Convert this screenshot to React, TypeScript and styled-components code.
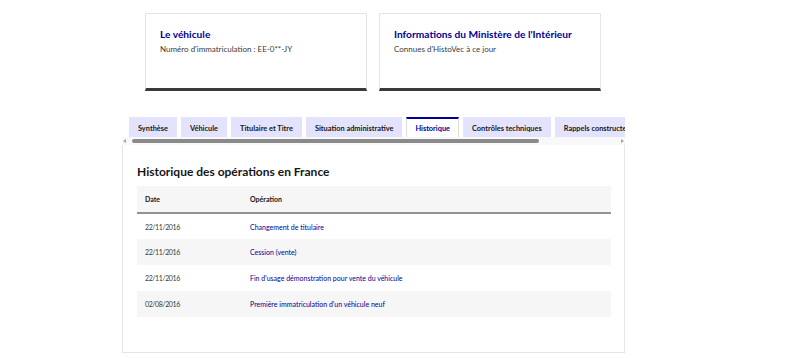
import React from "react";
import styled, { createGlobalStyle } from "styled-components";

const Global = createGlobalStyle`
  html, body { margin: 0; padding: 0; background: #fff; }
  body { font-family: Lato, "Liberation Sans", sans-serif; color: #161616; }
  * { box-sizing: border-box; }
`;

const Page = styled.div`
  width: 800px;
  height: 358px;
  padding-left: 122px;
  padding-top: 13px;
  overflow: hidden;
`;

const Column = styled.div`
  width: 503px;
  display: flex;
  flex-direction: column;
`;

const Cards = styled.div`
  display: flex;
  gap: 12px;
  padding-left: 23px;
`;

const Card = styled.div`
  width: 222px;
  height: 78px;
  border: 1px solid #e5e5e5;
  border-bottom: 3px solid #3a3a3a;
  padding: 14px 14px;
  display: flex;
  flex-direction: column;
  gap: 3px;
`;

const CardTitle = styled.div`
  font-size: 10.2px;
  font-weight: 700;
  color: #000091;
  line-height: 13px;
  white-space: nowrap;
`;

const CardText = styled.div`
  font-size: 8px;
  color: #3a3a3a;
  line-height: 11px;
`;

const Tabs = styled.div`
  margin-top: 26px;
  display: flex;
  gap: 4px;
  padding-left: 7px;
  width: 503px;
  overflow: hidden;
`;

const Tab = styled.div<{ $active?: boolean }>`
  flex: none;
  height: 20px;
  padding: 0 8px;
  display: flex;
  align-items: center;
  font-size: 7.4px;
  font-weight: 700;
  white-space: nowrap;
  background: ${(p) => (p.$active ? "#fff" : "#e3e3fd")};
  color: ${(p) => (p.$active ? "#000091" : "#161616")};
  border-top: 2px solid ${(p) => (p.$active ? "#000091" : "transparent")};
  border-left: 1px solid ${(p) => (p.$active ? "#ddd" : "transparent")};
  border-right: 1px solid ${(p) => (p.$active ? "#ddd" : "transparent")};
`;

const ScrollBar = styled.div`
  height: 8px;
  display: flex;
  align-items: center;
  gap: 2px;
  background: #f8f8f8;
  padding: 0 1px;
`;

const Arrow = styled.div<{ $dir: "left" | "right" }>`
  width: 0;
  height: 0;
  border-top: 2.5px solid transparent;
  border-bottom: 2.5px solid transparent;
  ${(p) =>
    p.$dir === "left"
      ? "border-right: 3px solid #a3a3a3;"
      : "border-left: 3px solid #a3a3a3;"}
`;

const Track = styled.div`
  flex: 1;
  height: 8px;
  display: flex;
  align-items: center;
  padding-left: 4px;
`;

const Thumb = styled.div`
  width: 407px;
  height: 4px;
  border-radius: 2px;
  background: #8a8a8a;
`;

const Panel = styled.div`
  height: 208px;
  border: 1px solid #e5e5e5;
  border-top: none;
  padding: 18px 14px 0 14px;
`;

const Heading = styled.h2`
  margin: 0;
  font-size: 12px;
  font-weight: 700;
  line-height: 18px;
  color: #161616;
`;

const Table = styled.table`
  margin-top: 5px;
  width: 474px;
  border-collapse: collapse;
  font-size: 7px;
`;

const Th = styled.th`
  text-align: left;
  height: 27px;
  background: #f6f6f6;
  border-bottom: 2px solid #929292;
  padding: 0 8px;
  font-weight: 700;
  color: #161616;
`;

const Tr = styled.tr<{ $alt?: boolean }>`
  background: ${(p) => (p.$alt ? "#f6f6f6" : "#fff")};
`;

const DateCell = styled.td`
  height: 26px;
  width: 105px;
  padding: 0 8px;
  color: #3a3a3a;
  letter-spacing: -0.4px;
`;

const OpCell = styled.td`
  padding: 0 8px;
  color: #000091;
`;

const rows = [
  ["22/11/2016", "Changement de titulaire"],
  ["22/11/2016", "Cession (vente)"],
  ["22/11/2016", "Fin d'usage démonstration pour vente du véhicule"],
  ["02/08/2016", "Première immatriculation d'un véhicule neuf"],
];

const tabs = [
  "Synthèse",
  "Véhicule",
  "Titulaire et Titre",
  "Situation administrative",
  "Historique",
  "Contrôles techniques",
  "Rappels constructeur",
];

export default function App() {
  return (
    <>
      <Global />
      <Page>
        <Column>
          <Cards>
            <Card>
              <CardTitle>Le véhicule</CardTitle>
              <CardText>Numéro d'immatriculation : EE-0**-JY</CardText>
            </Card>
            <Card>
              <CardTitle>Informations du Ministère de l'Intérieur</CardTitle>
              <CardText>Connues d'HistoVec à ce jour</CardText>
            </Card>
          </Cards>
          <Tabs>
            {tabs.map((t) => (
              <Tab key={t} $active={t === "Historique"}>
                {t}
              </Tab>
            ))}
          </Tabs>
          <ScrollBar>
            <Arrow $dir="left" />
            <Track>
              <Thumb />
            </Track>
            <Arrow $dir="right" />
          </ScrollBar>
          <Panel>
            <Heading>Historique des opérations en France</Heading>
            <Table>
              <thead>
                <tr>
                  <Th>Date</Th>
                  <Th>Opération</Th>
                </tr>
              </thead>
              <tbody>
                {rows.map((r, i) => (
                  <Tr key={i} $alt={i % 2 === 1}>
                    <DateCell>{r[0]}</DateCell>
                    <OpCell>{r[1]}</OpCell>
                  </Tr>
                ))}
              </tbody>
            </Table>
          </Panel>
        </Column>
      </Page>
    </>
  );
}
